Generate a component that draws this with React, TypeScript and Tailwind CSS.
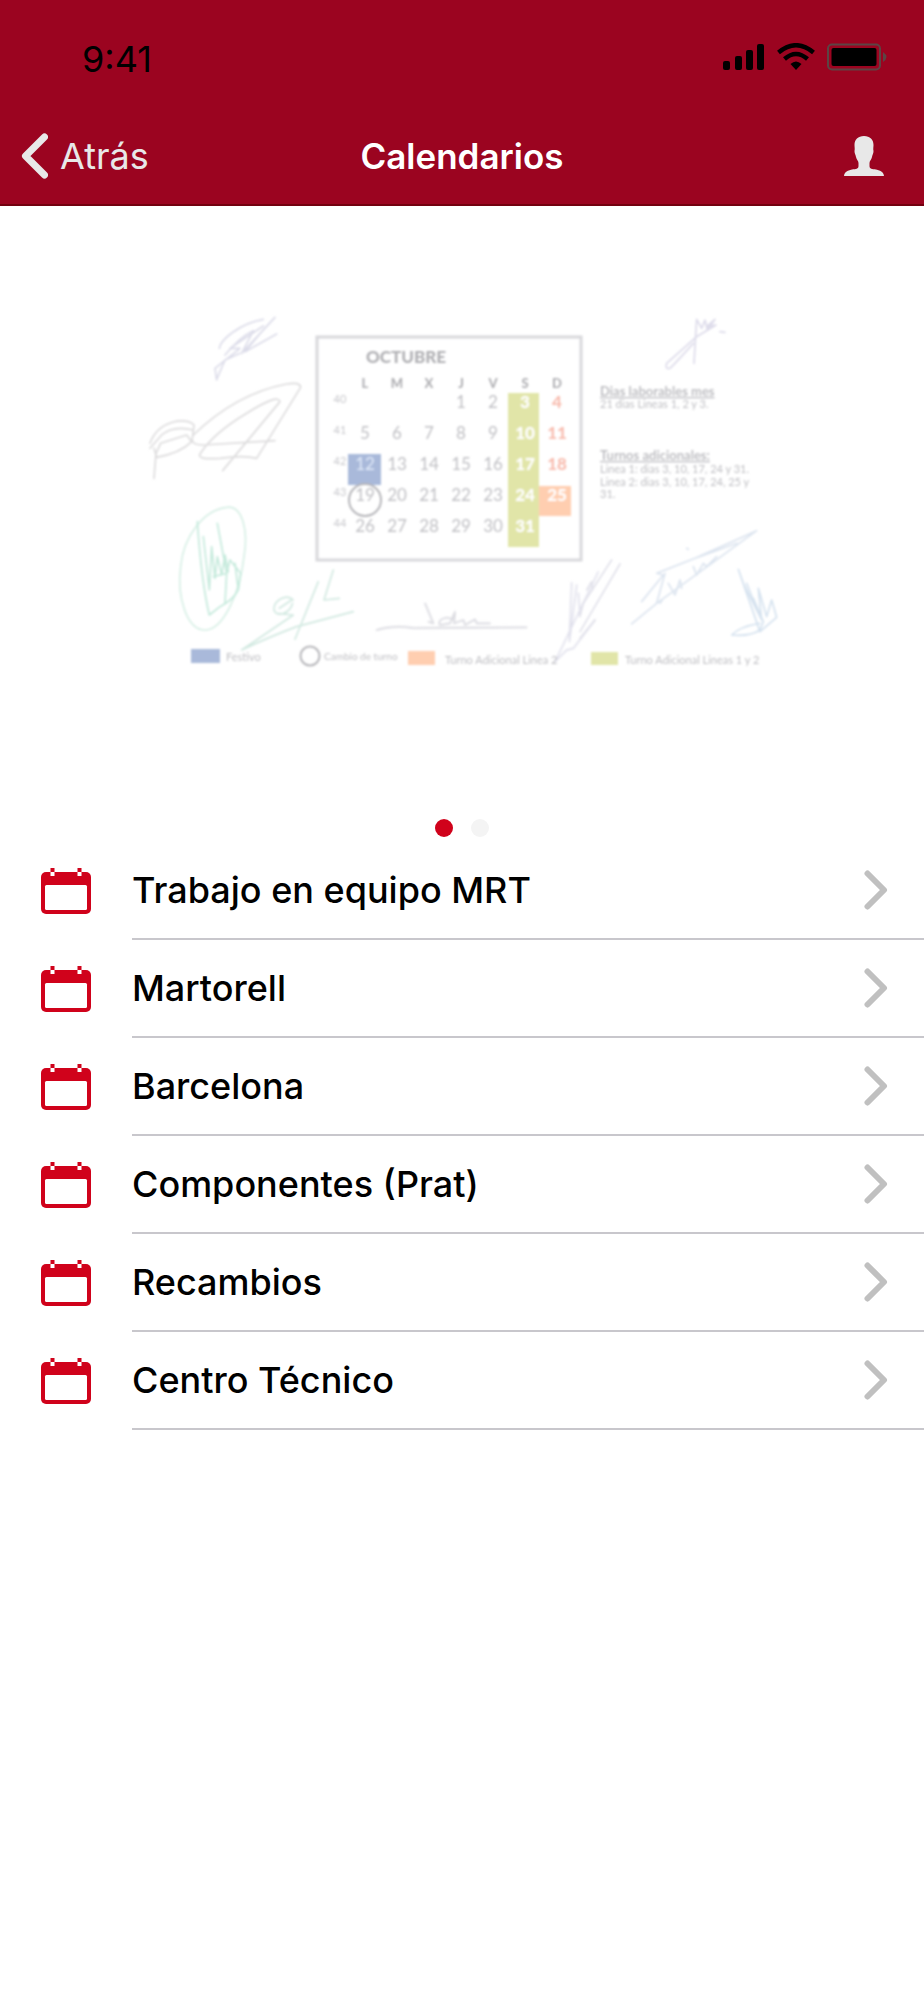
// src/App.tsx

import React from 'react';

const calendars = [
    'Trabajo en equipo MRT',
    'Martorell',
    'Barcelona',
    'Componentes (Prat)',
    'Recambios',
    'Centro Técnico',
];

const weekdays = ['L', 'M', 'X', 'J', 'V', 'S', 'D'];

const weeks: Array<{ number: number; days: Array<number | null> }> = [
    { number: 40, days: [null, null, null, 1, 2, 3, 4] },
    { number: 41, days: [5, 6, 7, 8, 9, 10, 11] },
    { number: 42, days: [12, 13, 14, 15, 16, 17, 18] },
    { number: 43, days: [19, 20, 21, 22, 23, 24, 25] },
    { number: 44, days: [26, 27, 28, 29, 30, 31, null] },
];

const dayColor = (day: number, column: number) => {
    if (day === 12) return '#dfe8f8';
    if (column === 5 || day === 25) return '#ffffff';
    if (column === 6) return '#f8bdb0';
    return '#c0c0c4';
};

const StatusBar: React.FC = () => (
    <div className="flex h-[104px] items-center justify-between pl-[82px] pr-9 pt-[14px] text-black">
        <span className="text-[36px] leading-10">9:41</span>
        <svg viewBox="0 0 166 28" className="mb-1 h-7 w-[166px]" aria-hidden="true">
            <rect x="1" y="18" width="7" height="9" rx="2" />
            <rect x="13" y="13" width="7" height="14" rx="2" />
            <rect x="24" y="7" width="7" height="20" rx="2" />
            <rect x="35" y="1" width="7" height="26" rx="2" />
            <g fill="none" stroke="#000" strokeWidth="4.5">
                <path d="M56.500 9.500Q74 -5 91.500 9.500" />
                <path d="M62.500 16Q74 6 85.500 16" />
            </g>
            <path d="M68.500 21Q74 16 79.500 21L74 27Z" />
            <rect x="106" y="1.500" width="52" height="25" rx="4" fill="none" stroke="#5c4444" strokeWidth="2" />
            <rect x="109.500" y="5" width="45" height="18" rx="2" />
            <path d="M161 9Q168 14 161 19Z" fill="#5c4444" />
        </svg>
    </div>
);

const NavBar: React.FC = () => (
    <div className="grid h-[102px] grid-cols-3 items-center border-b-2 border-[#73000f] px-5 pt-1 text-[#e8e8e8]">
        <button type="button" className="flex items-center gap-3 text-[36px] leading-10">
            <svg viewBox="0 0 28 46" className="h-[46px] w-7" aria-hidden="true">
                <path d="M24.500 4L5.500 23L24.500 42" fill="none" stroke="currentColor" strokeWidth="7" strokeLinecap="round" strokeLinejoin="round" />
            </svg>
            Atrás
        </button>
        <h1 className="text-center text-[35px] font-semibold leading-10 text-white">Calendarios</h1>
        <button type="button" aria-label="Perfil" className="justify-self-end px-5">
            <svg viewBox="0 0 40 40" className="size-10" fill="currentColor" aria-hidden="true">
                <path d="M20 0C26 0 29.500 3.500 29.500 9C29.500 11 29 13 29.500 15C29.500 17.500 28.500 18.500 28 21C27.500 23.500 25.500 25 25.500 27V30C25.500 33 28 33 32 33.500C37 34.500 39.500 36 40 40H0C.5 36 3 34.500 8 33.500C12 33 14.500 33 14.500 30V27C14.500 25 12.500 23.500 12 21C11.500 18.500 10.500 17.500 10.500 15C11 13 10.500 11 10.500 9C10.500 3.500 14 0 20 0Z" />
            </svg>
        </button>
    </div>
);

const Signatures: React.FC = () => (
    <g fill="none" strokeLinecap="round" strokeLinejoin="round" strokeWidth="5">
        {/* left side */}
        <g transform="translate(130 300) scale(.3333)">
            <path stroke="#dcdce9" d="M268 145C270 120 330 70 400 58M285 165Q330 110 370 92L335 160L435 52L395 95L345 155L440 102M260 240L255 205L330 145L300 145L400 78M260 238L285 180L330 160" />
            <path stroke="#dddcdd" d="M190 405Q320 280 470 252Q510 245 512 262L380 475M278 512L450 305Q445 280 350 340Q250 400 210 462Q200 480 270 475Q340 465 380 475M190 405Q175 435 220 435L435 422M60 430C85 360 170 350 192 375L188 410M60 445L95 405Q130 375 190 390M72 535L78 460L92 430L170 405L185 425Q150 460 80 472L72 445" />
            <path stroke="#d7efe5" d="M290 622C340 615 355 700 342 770C330 880 280 985 230 990C170 995 140 890 152 800C160 710 220 630 290 622Z" />
            <path stroke="#c5eadc" d="M202 665Q215 850 238 945L270 920Q310 900 325 870L332 820L300 780L290 820L262 670M220 710L238 870L245 740L255 835L262 770L275 825L285 765L295 815M250 830L290 820L285 910M325 870L315 790" />
            <path stroke="#d2e9e1" d="M565 845L495 1018M490 900C470 880 430 900 432 930C440 955 480 940 488 910M448 925L485 900M440 940L490 945L335 1050Q420 1010 500 980L670 935M610 810L582 900L628 895" />
        </g>
        {/* bottom centre */}
        <g transform="translate(180 560) scale(.3333)" stroke="#d8d8de">
            <path d="M590 210Q640 195 700 204L1040 202M735 130L760 190L745 185M820 178C790 165 770 185 780 195L810 190L825 155L822 190L850 180L855 195L885 178L890 190L930 190" />
            <path stroke="#e0e0ec" d="M1175 68L1168 245L1190 75M1195 100L1200 165M1255 35L1125 305L1160 270L1180 265L1245 180" />
        </g>
        {/* right side */}
        <g transform="translate(580 300) scale(.3333)">
            <path stroke="#dddbea" d="M342 190L350 58L365 85L375 60L382 90L405 58L380 80L408 75L350 110L260 190Q255 210 270 205Q295 180 340 130M420 95L435 97" />
            <path stroke="#e1e1ea" d="M120 792L0 995M95 780L10 910L0 950M20 870L35 845L38 870M0 1015L45 960" />
            <path stroke="#dce4ef" d="M155 972L230 910L530 692L345 775L230 820L250 825L185 905M345 775L470 730M230 910L255 820M250 895L240 910M265 850L285 885L300 840L305 865M320 745L325 748M340 800L350 825L370 790L380 800L410 770" />
            <path stroke="#d5e2ef" d="M475 808L540 995L590 952L575 900L560 950L535 865L545 960L490 850L475 808M500 850L535 940L520 895L550 965L540 990Q510 1010 455 1005Q480 980 540 970" />
        </g>
    </g>
);

const CalendarSlide: React.FC = () => (
    <svg viewBox="0 206 924 594" className="block w-full" role="img" aria-label="Calendario de octubre">
        <defs>
            <filter id="soft">
                <feGaussianBlur stdDeviation="1" />
            </filter>
        </defs>
        <g filter="url(#soft)" className="font-['Lato',sans-serif]">
            <Signatures />

            <rect x="317" y="337" width="264" height="223" fill="none" stroke="#d8d8dc" strokeWidth="3" />
            <rect x="508" y="393" width="31" height="154" fill="#e1e5a8" />
            <rect x="348" y="454" width="33" height="31" fill="#a9b9da" />
            <rect x="539" y="486" width="32" height="30" fill="#ffceb0" />

            <text x="366" y="363" fontSize="17" fontWeight="900" fill="#b0b0b4">OCTUBRE</text>
            {weekdays.map((name, column) => (
                <text key={name} x={365 + column * 32} y="388" fontSize="13" fontWeight="900" textAnchor="middle" fill="#b0b0b4">
                    {name}
                </text>
            ))}
            {weeks.map((week, row) => (
                <g key={week.number} textAnchor="middle">
                    <text x="340" y={403 + row * 31} fontSize="11" fill="#c8c8cc">{week.number}</text>
                    {week.days.map((day, column) => day && (
                        <text
                            key={day}
                            x={365 + column * 32}
                            y={408 + row * 31}
                            fontSize="17"
                            fontWeight={column > 4 ? 900 : 400}
                            fill={dayColor(day, column)}
                        >
                            {day}
                        </text>
                    ))}
                </g>
            ))}
            <circle cx="365" cy="500" r="16" fill="none" stroke="#b6b6ba" strokeWidth="2" />

            <g fill="#bebec2" fontSize="11">
                <text x="600" y="396" fontSize="13" fontWeight="700" textDecoration="underline">Dias laborables mes</text>
                <text x="600" y="408">21 dias Lineas 1, 2 y 3.</text>
                <text x="600" y="460" fontSize="13" fontWeight="700" textDecoration="underline">Turnos adicionales:</text>
                <text x="600" y="473">Linea 1: dias 3, 10, 17, 24 y 31.</text>
                <text x="600" y="486">Linea 2: dias 3, 10, 17, 24, 25 y</text>
                <text x="600" y="498">31.</text>
            </g>

            <rect x="191" y="649" width="29" height="14" fill="#a9b9da" />
            <circle cx="310" cy="656" r="9.500" fill="none" stroke="#b6b6ba" strokeWidth="2" />
            <rect x="408" y="651" width="27" height="14" fill="#ffceb0" />
            <rect x="591" y="652" width="27" height="13" fill="#e1e5a8" />
            <g fill="#bebec2" fontSize="11">
                <text x="226" y="661">Festivo</text>
                <text x="324" y="660" fontSize="10">Cambio de turno</text>
                <text x="445" y="664">Turno Adicional Linea 2</text>
                <text x="625" y="664">Turno Adicional Lineas 1 y 2</text>
            </g>
        </g>
    </svg>
);

const CalendarIcon: React.FC = () => (
    <svg viewBox="0 0 50 46" className="h-[46px] w-[50px] shrink-0" aria-hidden="true">
        <rect y="4" width="50" height="42" rx="5" fill="#d0021b" />
        <rect x="4" y="17" width="42" height="25" rx="1.500" fill="#fff" />
        <path d="M9.500 3h4v5h-4zM36.500 3h4v5h-4z" fill="#fff" />
        <path d="M9.500 0h4v4h-4zM36.500 0h4v4h-4z" fill="#d0021b" />
    </svg>
);

const CalendarRow: React.FC<{ name: string }> = ({ name }) => (
    <li>
        <a href="#" className="flex h-[98px] items-stretch gap-[41px] pl-[41px]">
            <span className="flex items-center">
                <CalendarIcon />
            </span>
            <span className="flex flex-1 items-center justify-between border-b-2 border-[#c8c7cc] pr-9 text-[36px] font-medium leading-10">
                {name}
                <svg viewBox="0 0 24 40" className="h-10 w-6" aria-hidden="true">
                    <path d="M3.500 3.500L20 20L3.500 36.500" fill="none" stroke="#c0c0c0" strokeWidth="6" strokeLinecap="round" strokeLinejoin="round" />
                </svg>
            </span>
        </a>
    </li>
);

export default function App() {
    return (
        <div className="min-h-screen bg-white font-['Inter',sans-serif] text-black">
            <header className="bg-[#9b0420]">
                <StatusBar />
                <NavBar />
            </header>

            <main>
                <CalendarSlide />
                <div className="flex justify-center gap-[18px] pb-[5px] pt-[19px]">
                    <button type="button" aria-label="Página 1" className="size-[18px] rounded-full bg-[#d0021b]" />
                    <button type="button" aria-label="Página 2" className="size-[18px] rounded-full bg-[#f4f4f4]" />
                </div>
                <ul>
                    {calendars.map((name) => (
                        <CalendarRow key={name} name={name} />
                    ))}
                </ul>
            </main>
        </div>
    );
}
